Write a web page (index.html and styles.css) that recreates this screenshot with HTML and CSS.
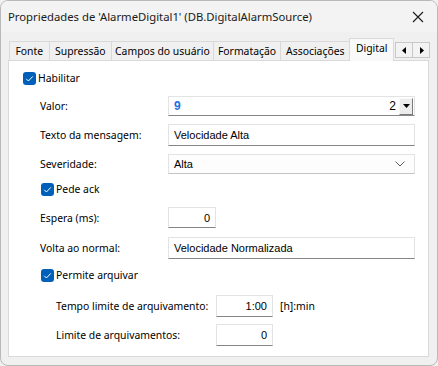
FILE: index.html
```html
<!DOCTYPE html>
<html lang="pt">
<head>
  <meta charset="UTF-8">
  <title>Propriedades de 'AlarmeDigital1'</title>
  <link rel="stylesheet" href="styles.css">
</head>
<body>
  <div class="window">
    <div class="titlebar">
      <span class="title">Propriedades de 'AlarmeDigital1' (DB.DigitalAlarmSource)</span>
      <svg class="close" width="12" height="12" viewBox="0 0 12 12"><path d="M1 1 L11 11 M11 1 L1 11" stroke="#1a1a1a" stroke-width="1.1" fill="none"/></svg>
    </div>
    <div class="content">
      <div class="tabs">
        <div class="tab t-fonte">Fonte</div>
        <div class="tab t-supr">Supressão</div>
        <div class="tab t-campos">Campos do usuário</div>
        <div class="tab t-format">Formatação</div>
        <div class="tab t-assoc">Associações</div>
        <div class="tab t-digital active">Digital</div>
        <div class="tab-arrows">
          <div class="arrow"><svg width="5" height="7" viewBox="0 0 5 7"><path d="M4 0 L0 3.5 L4 7 Z" fill="#000"/></svg></div>
          <div class="arrow"><svg width="5" height="7" viewBox="0 0 5 7"><path d="M1 0 L5 3.5 L1 7 Z" fill="#000"/></svg></div>
        </div>
      </div>
      <div class="panel">
        <div class="check-row top">
          <span class="checkbox"><svg width="13" height="13" viewBox="0 0 13 13"><path d="M3.2 6.8 L5.4 9 L9.8 4.4" stroke="#fff" stroke-width="1" fill="none"/></svg></span>
          <span>Habilitar</span>
        </div>
        <div class="row h20">
          <label>Valor:</label>
          <div class="field value">
            <span class="nine">9</span>
            <span class="two">2</span>
            <span class="drop-btn"><svg width="7" height="4" viewBox="0 0 7 4"><path d="M0 0 L7 0 L3.5 4 Z" fill="#000"/></svg></span>
          </div>
        </div>
        <div class="row">
          <label>Texto da mensagem:</label>
          <div class="field wide">Velocidade Alta</div>
        </div>
        <div class="row h20">
          <label>Severidade:</label>
          <div class="field wide combo">
            <span>Alta</span>
            <svg width="10" height="6" viewBox="0 0 10 6"><path d="M0.5 0.5 L5 5 L9.5 0.5" stroke="#606060" stroke-width="1" fill="none"/></svg>
          </div>
        </div>
        <div class="check-row indent ack">
          <span class="checkbox"><svg width="13" height="13" viewBox="0 0 13 13"><path d="M3.2 6.8 L5.4 9 L9.8 4.4" stroke="#fff" stroke-width="1" fill="none"/></svg></span>
          <span>Pede ack</span>
        </div>
        <div class="row h21">
          <label>Espera (ms):</label>
          <div class="field small num">0</div>
        </div>
        <div class="row volta">
          <label>Volta ao normal:</label>
          <div class="field wide">Velocidade Normalizada</div>
        </div>
        <div class="check-row indent archive">
          <span class="checkbox"><svg width="13" height="13" viewBox="0 0 13 13"><path d="M3.2 6.8 L5.4 9 L9.8 4.4" stroke="#fff" stroke-width="1" fill="none"/></svg></span>
          <span>Permite arquivar</span>
        </div>
        <div class="row sub tempo">
          <label>Tempo limite de arquivamento:</label>
          <div class="field mid num">1:00</div>
          <span class="unit">[h]:min</span>
        </div>
        <div class="row sub limite">
          <label>Limite de arquivamentos:</label>
          <div class="field mid num">0</div>
        </div>
      </div>
    </div>
  </div>
</body>
</html>
```

FILE: styles.css
```css
* {
  margin: 0;
  padding: 0;
  box-sizing: border-box;
}
body {
  background: #f0f0f0;
  font-family: "Segoe UI", "Noto Sans", sans-serif;
  font-size: 10.4px;
  color: #000;
  white-space: nowrap;
}
.window {
  width: 438px;
  height: 366px;
  border: 1px solid #b9b9b9;
  border-radius: 8px;
  background: #f0f0f0;
  overflow: hidden;
}
.titlebar {
  height: 31px;
  display: flex;
  align-items: center;
  justify-content: space-between;
  padding: 0 13px 0 7px;
  background: #f3f3f3;
}
.title {
  font-size: 11.3px;
  color: #1a1a1a;
}
.content {
  padding: 8px 8px 0 7px;
}
.tabs {
  display: flex;
  align-items: flex-end;
  height: 20px;
  padding-left: 1px;
}
.tab {
  height: 19px;
  line-height: 18px;
  text-align: center;
  border: 1px solid #d9d9d9;
  border-bottom: none;
  margin-right: -1px;
  background: #f0f0f0;
}
.t-fonte { width: 41px; }
.t-supr { width: 64px; }
.t-campos { width: 104px; }
.t-format { width: 69px; }
.t-assoc { width: 71px; }
.tab.active {
  width: 45px;
  height: 23px;
  margin-bottom: -1px;
  background: #f9f9f9;
  line-height: 19px;
  position: relative;
  z-index: 1;
}
.tab-arrows {
  display: flex;
  margin-left: 2px;
  margin-bottom: 2px;
}
.arrow {
  width: 18px;
  height: 16px;
  border: 1px solid #c8c8c8;
  background: #f3f3f3;
  display: flex;
  align-items: center;
  justify-content: center;
  margin-right: -1px;
}
.panel {
  height: 297px;
  width: 421px;
  background: #fff;
  border: 1px solid #d9d9d9;
  padding: 7px 0 0 14px;
}
.check-row {
  height: 20px;
  display: flex;
  align-items: center;
  gap: 2px;
}
.check-row.indent {
  margin-left: 18px;
}
.check-row.ack {
  margin-top: 5px;
}
.check-row.archive {
  margin-top: 6px;
}
.checkbox {
  width: 13px;
  height: 13px;
  border-radius: 3px;
  background: #005fb8;
  display: inline-flex;
}
.row {
  display: flex;
  align-items: center;
  height: 22px;
  margin-top: 8px;
  padding-left: 17px;
}
.row.h20 {
  height: 20px;
}
.row.h21 {
  height: 21px;
}
.row.volta {
  margin-top: 9px;
}
.row label {
  width: 128px;
  flex-shrink: 0;
}
.row.sub {
  padding-left: 33px;
}
.row.sub label {
  width: 160px;
}
.row.tempo {
  margin-top: 10px;
}
.row.limite {
  margin-top: 7px;
}
.field {
  height: 100%;
  border: 1px solid #e3e3e3;
  border-bottom-color: #868686;
  background: #fff;
  display: flex;
  align-items: center;
  padding: 0 5px;
  font-family: "Liberation Sans", Arial, sans-serif;
  font-size: 11px;
}
.field.wide {
  width: 247px;
}
.field.small {
  width: 48px;
}
.field.mid {
  width: 57px;
}
.field.num {
  justify-content: flex-end;
}
.field.combo {
  justify-content: space-between;
  background: #fdfdfd;
  border-bottom-color: #c4c4c4;
  padding-right: 9px;
}
.field.value {
  width: 247px;
  padding-right: 1px;
}
.nine {
  color: #1f6fe6;
  font-weight: bold;
  font-size: 12px;
  flex: 1;
}
.two {
  font-size: 12px;
  margin-right: 3px;
}
.drop-btn {
  width: 14px;
  height: 17px;
  background: #ececec;
  border: 1px solid #f9f9f9;
  border-right-color: #7a7a7a;
  border-bottom-color: #7a7a7a;
  display: flex;
  align-items: center;
  justify-content: center;
}
.unit {
  margin-left: 7px;
}
```
